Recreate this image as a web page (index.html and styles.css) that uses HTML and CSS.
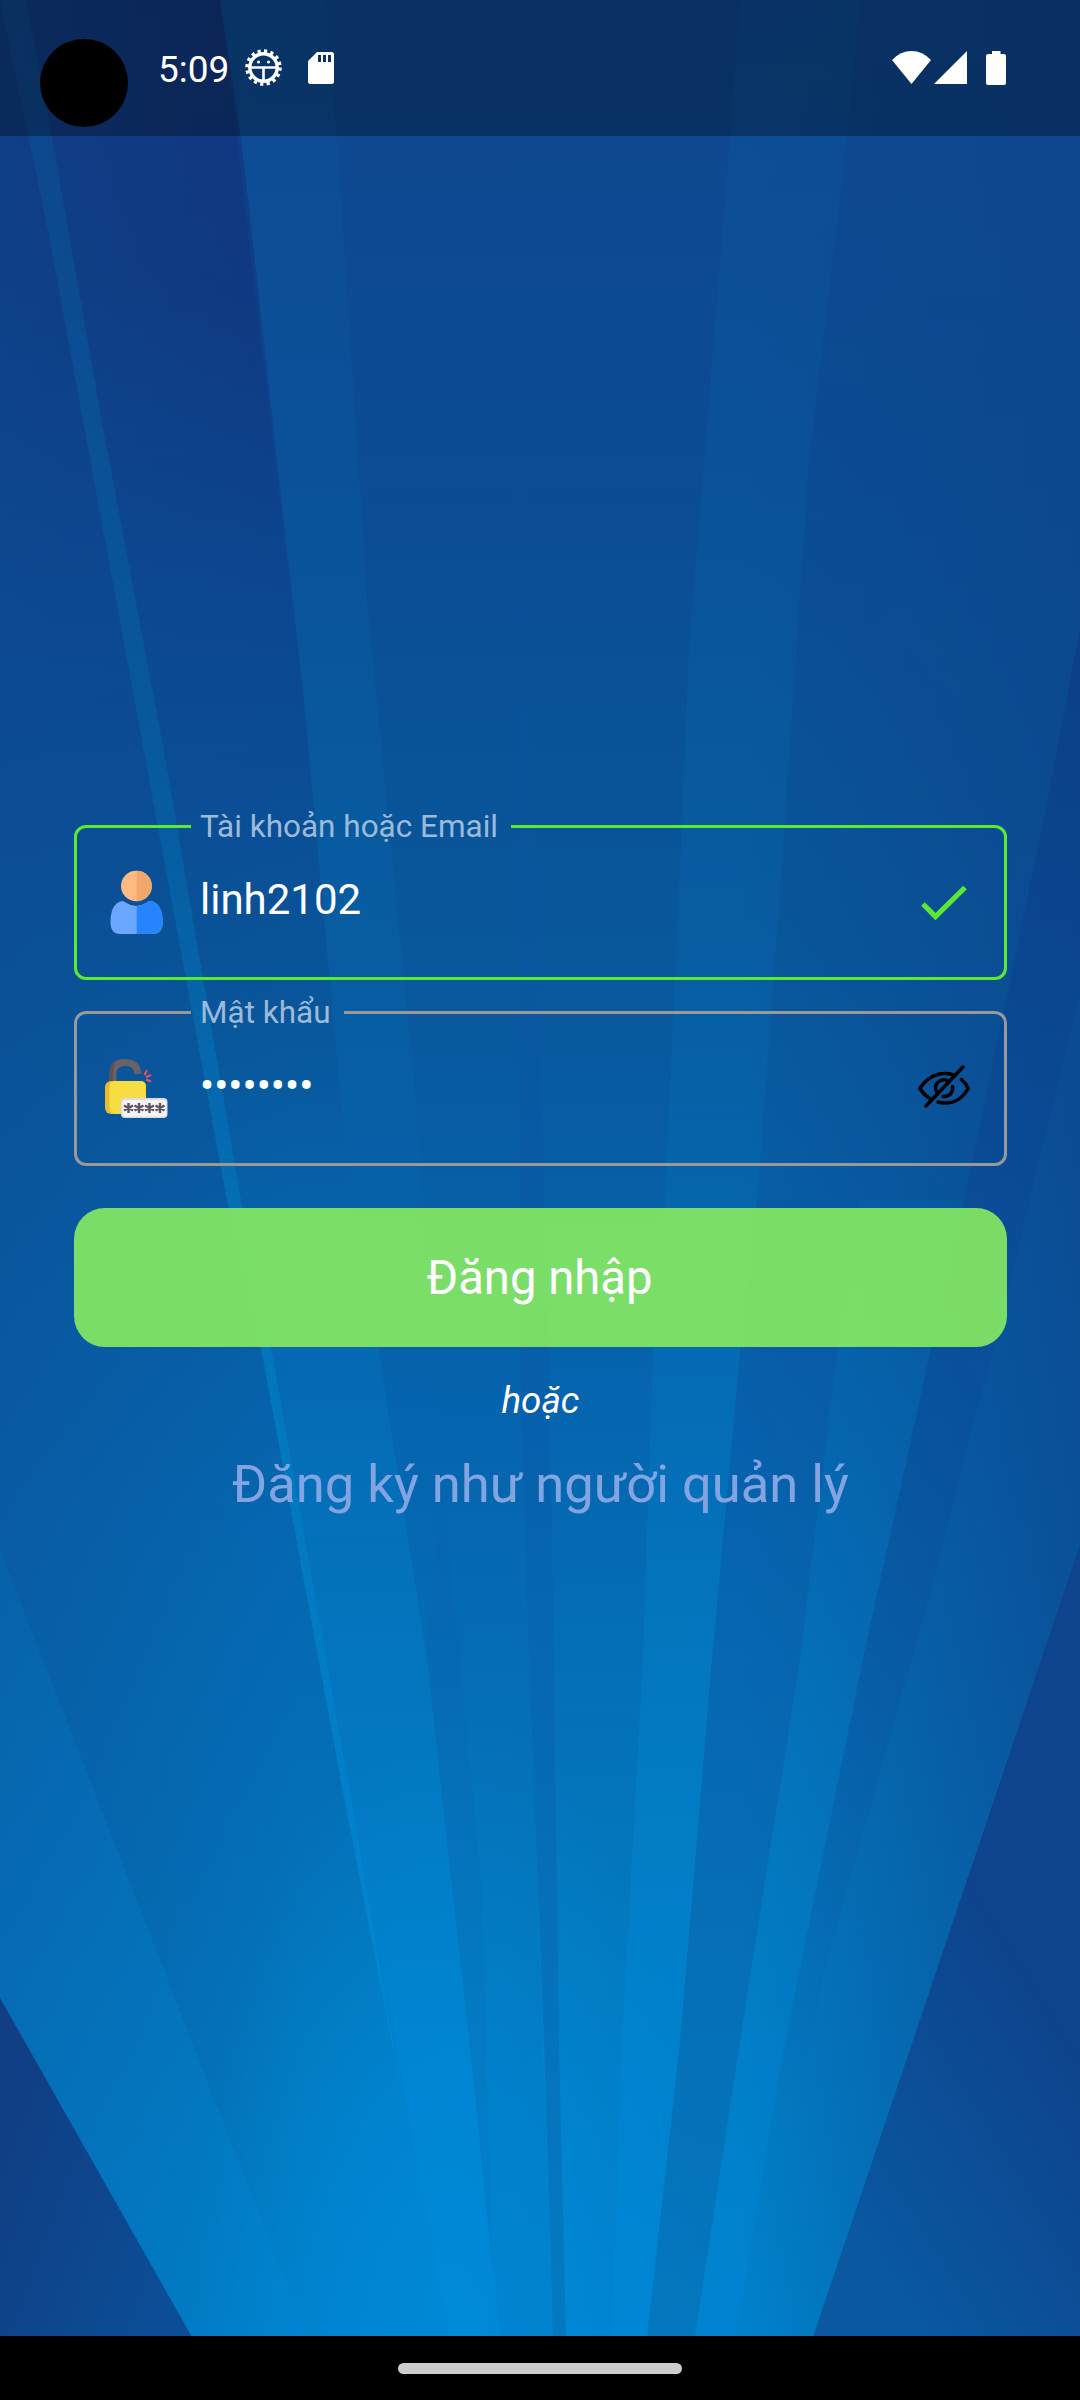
FILE: index.html
```html
<!DOCTYPE html>
<html lang="vi">
<head>
<meta charset="utf-8">
<title>Đăng nhập</title>
<link rel="stylesheet" href="styles.css">
</head>
<body>
<div class="screen">
  <svg class="backdrop" viewBox="0 0 1080 2337" aria-hidden="true">
    <defs>
      <linearGradient id="base" gradientUnits="userSpaceOnUse" x1="0" y1="0" x2="0" y2="2337">
        <stop offset="0" stop-color="#0f4790"/><stop offset=".2" stop-color="#0b4c94"/>
        <stop offset=".4" stop-color="#09579b"/><stop offset=".6" stop-color="#0565ae"/>
        <stop offset=".8" stop-color="#0377bd"/><stop offset="1" stop-color="#0082cc"/>
      </linearGradient>
      <linearGradient id="left" gradientUnits="userSpaceOnUse" x1="0" y1="0" x2="0" y2="2337">
        <stop offset="0" stop-color="#12347d"/><stop offset=".12" stop-color="#10387f"/>
        <stop offset=".25" stop-color="#0c4690"/><stop offset=".42" stop-color="#09559a"/>
        <stop offset=".65" stop-color="#0567b0"/><stop offset=".85" stop-color="#0374ba"/><stop offset="1" stop-color="#007dc4"/>
      </linearGradient>
      <linearGradient id="leftfade" gradientUnits="userSpaceOnUse" x1="0" y1="0" x2="300" y2="0">
        <stop offset="0" stop-color="#0d4b93" stop-opacity=".42"/><stop offset="1" stop-color="#0d4b93" stop-opacity="0"/>
      </linearGradient>
      <linearGradient id="rightfade" gradientUnits="userSpaceOnUse" x1="740" y1="0" x2="1080" y2="0">
        <stop offset="0" stop-color="#0c468e" stop-opacity="0"/><stop offset="1" stop-color="#0c468e" stop-opacity=".72"/>
      </linearGradient>
      <linearGradient id="glow" gradientUnits="userSpaceOnUse" x1="0" y1="0" x2="0" y2="2337">
        <stop offset="0" stop-color="#0678bd" stop-opacity=".14"/><stop offset=".5" stop-color="#0380c8" stop-opacity=".28"/>
        <stop offset=".7" stop-color="#0088d2" stop-opacity=".5"/><stop offset=".9" stop-color="#0088d6" stop-opacity=".9"/>
        <stop offset="1" stop-color="#0088d6"/>
      </linearGradient>
      <linearGradient id="upper" gradientUnits="userSpaceOnUse" x1="0" y1="0" x2="0" y2="1468">
        <stop offset="0" stop-color="#0678bd" stop-opacity=".07"/><stop offset=".6" stop-color="#0380c8" stop-opacity=".14"/>
        <stop offset="1" stop-color="#0380c8" stop-opacity="0"/>
      </linearGradient>
      <linearGradient id="wedge" gradientUnits="userSpaceOnUse" x1="0" y1="1000" x2="0" y2="2337">
        <stop offset="0" stop-color="#0088d2" stop-opacity="0"/><stop offset=".4" stop-color="#0088d2" stop-opacity=".3"/>
        <stop offset="1" stop-color="#0088d6" stop-opacity=".6"/>
      </linearGradient>
      <radialGradient id="core" gradientUnits="userSpaceOnUse" cx="0" cy="0" r="1" gradientTransform="translate(450 2337) scale(260 620)">
        <stop offset="0" stop-color="#008bda" stop-opacity=".85"/><stop offset=".45" stop-color="#008ad8" stop-opacity=".6"/>
        <stop offset="1" stop-color="#0088d4" stop-opacity="0"/>
      </radialGradient>
      <linearGradient id="beam" gradientUnits="userSpaceOnUse" x1="0" y1="0" x2="0" y2="2100">
        <stop offset="0" stop-color="#0a5598" stop-opacity=".35"/><stop offset=".35" stop-color="#075c9f" stop-opacity=".8"/>
        <stop offset=".65" stop-color="#0276bc"/><stop offset="1" stop-color="#0088d4"/>
      </linearGradient>
      <linearGradient id="shade" gradientUnits="userSpaceOnUse" x1="0" y1="400" x2="0" y2="2337">
        <stop offset="0" stop-color="#0a4e9c" stop-opacity="0"/><stop offset=".45" stop-color="#0a57a6" stop-opacity=".5"/>
        <stop offset="1" stop-color="#0670b4" stop-opacity=".6"/>
      </linearGradient>
      <linearGradient id="duskright" gradientUnits="userSpaceOnUse" x1="0" y1="627" x2="0" y2="2100">
        <stop offset="0" stop-color="#0c3b85" stop-opacity=".7"/><stop offset=".5" stop-color="#0a4a98" stop-opacity=".5"/>
        <stop offset="1" stop-color="#0a4e9c" stop-opacity="0"/>
      </linearGradient>
      <linearGradient id="navyleft" gradientUnits="userSpaceOnUse" x1="0" y1="2170" x2="190" y2="2240">
        <stop offset="0" stop-color="#103f85"/><stop offset="1" stop-color="#0b4e97"/>
      </linearGradient>
      <linearGradient id="navyright" gradientUnits="userSpaceOnUse" x1="840" y1="2200" x2="1080" y2="2050">
        <stop offset="0" stop-color="#0958a0"/><stop offset="1" stop-color="#0e438d"/>
      </linearGradient>
    </defs>
    <rect width="1080" height="2337" fill="url(#base)"/>
    <path fill="url(#left)" d="M0 0H220L241 138L303 689L350 1200L379 1353L427 1659L475 2095L500 2337H0Z"/>
    <rect width="300" height="2337" fill="url(#leftfade)"/>
    <rect x="740" width="340" height="2337" fill="url(#rightfade)"/>
    <path fill="url(#glow)" opacity=".3" d="M0 1550L307 2337H192L0 1998Z"/>
    <path fill="url(#upper)" d="M220 0H325L337 138L368 612L413 1071L441 1468H397L379 1353L350 1200L303 689Z"/>
    <path fill="url(#wedge)" d="M200 1000H331L350 1200L379 1353L427 1659L475 2095L500 2337H450L386 1996L348 1781L272 1353L241 1200Z"/>
    <path fill="url(#beam)" d="M0 0H26L52 138L103 428L165 757L241 1200L272 1353L348 1781L405 2110L341 1781L262 1353L227 1200L145 757L48 230Z"/>
    <path fill="url(#core)" d="M180 1700H720V2337H180Z"/>
    <path fill="url(#shade)" opacity=".35" d="M427 1659L441 1468L482 1889L492 2271L475 2095Z"/>
    <path fill="url(#shade)" opacity=".3" d="M475 2095L427 1659L379 1353L350 1200L520 1200L529 1659L553 2337H500Z"/>
    <path fill="url(#shade)" d="M516 138H522L535 900L549 1353L554 1659L559 2042L566 2337H553L544 2042L529 1659L520 1353Z"/>
    <path fill="url(#glow)" opacity=".6" d="M740 0H860L847 138L809 459L778 918L757 1200L740 1353L712 1659L680 2042L647 2337H612L622 2042L643 1659L653 1353L665 1200L678 918L689 650L730 138Z"/>
    <path fill="url(#shade)" d="M757 1200H858L837 1353L800 1659L740 2042L695 2337H647L680 2042L712 1659L740 1353Z"/>
    <path fill="url(#glow)" opacity=".35" d="M858 1200H964L930 1353L863 1659L785 2042L735 2337H695L740 2042L800 1659L837 1353Z"/>
    <path fill="url(#duskright)" d="M1080 627L1047 803L999 1033L964 1200L930 1353L863 1659L785 2042L776 2100H800L826 1965L923 1620L992 1353L1030 1200L1080 995Z"/>
    <path fill="url(#navyleft)" d="M0 1998L192 2337H0Z"/>
    <path fill="url(#navyright)" d="M1080 1544L995 1797L813 2337H1080Z"/>
  </svg>

  <header class="status">
    <span class="camera"></span>
    <span class="clock">5:09</span>
    <svg class="ic-debug" viewBox="0 0 37 37"><g fill="none" stroke="#fff"><circle cx="18.500" cy="18.500" r="13.700" stroke-width="3.400"/><circle cx="18.500" cy="18.500" r="16" stroke-width="4.500" stroke-dasharray="3.100 3.183"/><path d="M5 18.500H32M18.500 18.500V32" stroke-width="2.600"/></g><circle cx="13.500" cy="13" r="1.500" fill="#fff"/><circle cx="23.500" cy="13" r="1.500" fill="#fff"/></svg>
    <svg class="ic-sd" viewBox="0 0 26 32"><path fill="#fff" fill-rule="evenodd" d="M9 0H23.500Q26 0 26 2.500V29.500Q26 32 23.500 32H2.500Q0 32 0 29.500V9ZM10 3V10H13V3ZM15 3V10H18V3ZM20 3V10H23V3Z"/></svg>
    <span class="spacer"></span>
    <svg class="ic-wifi" viewBox="0 0 39 33"><path fill="#fff" d="M0 9Q8.500 0 19.500 0T39 9L19.500 33Z"/></svg>
    <svg class="ic-cell" viewBox="0 0 33 33"><path fill="#fff" d="M33 0V33H0Z"/></svg>
    <svg class="ic-batt" viewBox="0 0 20 34"><path fill="#fff" d="M6 0H14.500V3H18Q20 3 20 5V32Q20 34 18 34H2Q0 34 0 32V5Q0 3 2 3H6Z"/></svg>
  </header>

  <main class="login">
    <fieldset class="field valid">
      <legend class="l-user">Tài khoản hoặc Email</legend>
      <div class="row">
        <svg class="ic-lead" viewBox="0 0 64 64"><circle cx="32.300" cy="16" r="15.300" fill="#ffb983"/><path fill="#f3a76a" d="M32.700.7A15.300 15.300 0 0 1 32.700 31.300Z"/><path fill="#6ba7ff" d="M6.500 52C6.500 42 9 33 18 31Q20 31 22.500 33Q32 39 42 33Q44 31 47 31C56 33 58.700 42 58.700 52Q58.700 64 49 64H16Q6.500 64 6.500 52Z"/><path fill="#2684ff" d="M32.700 36Q38 36 42 33Q44 31 47 31C56 33 58.700 42 58.700 52Q58.700 64 49 64H32.700Z"/></svg>
        <span class="value">linh2102</span>
        <svg class="ic-check" viewBox="0 0 46 36"><path fill="none" stroke="#5bea33" stroke-width="5.200" d="M2 19L14.500 31.500L44 2.500"/></svg>
      </div>
    </fieldset>
    <fieldset class="field">
      <legend class="l-pass">Mật khẩu</legend>
      <div class="row">
        <svg class="ic-lead" viewBox="0 -2 64 64"><path fill="none" stroke="#6a6167" stroke-width="7" d="M9 26V16Q9 4.500 21 4.500Q33 4.500 34 16"/><path fill="#5b5259" d="M5.500 26V14Q6 6 12 2Q9 8 9 14V26Z"/><rect x="1" y="23" width="41" height="33" rx="6" fill="#e9ba2e"/><rect x="5.500" y="23" width="36.500" height="33" rx="5" fill="#f5dd43"/><path fill="none" stroke="#e9545d" stroke-width="2" d="M40.500 17L43 12M42 19L47 17M42 21.500L47 23.500"/><rect x="17" y="40" width="46.500" height="20" rx="4" fill="#ded9e2"/><rect x="18.500" y="42" width="44" height="16.500" rx="3" fill="#f7f5fa"/><path stroke="#5f565d" stroke-width="2.400" d="M24.500 45V55M20 47.500L29 52.500M29 47.500L20 52.500M35 45V55M30.500 47.500L39.500 52.500M39.500 47.500L30.500 52.500M45.500 45V55M41 47.500L50 52.500M50 47.500L41 52.500M56 45V55M51.500 47.500L60.500 52.500M60.500 47.500L51.500 52.500"/></svg>
        <span class="value">••••••••</span>
        <svg class="ic-eye" viewBox="0 0 52 43"><g fill="none" stroke="#000" stroke-width="3.500" stroke-linecap="round"><path d="M12.500 34Q6 30 1.800 23.500Q12 8.500 27 8.500Q33 8.500 37 10.500"/><path d="M43.500 14.500Q48 18.500 50.200 23.500Q42 38 27 38Q23 38 20 37"/><path d="M19.500 28.500Q15.500 22 19.500 17.500Q25 12.500 31.500 16.500"/><path d="M34.500 21.500Q35.500 27 31 30Q28 32 25 31.500"/><path d="M8 41L45 2"/></g></svg>
      </div>
    </fieldset>
    <button class="submit">Đăng nhập</button>
    <p class="or">hoặc</p>
    <a class="register">Đăng ký như người quản lý</a>
  </main>

  <footer class="navbar"><span class="handle"></span></footer>
</div>
</body>
</html>
```

FILE: styles.css
```css
* { box-sizing: border-box; }
body { margin: 0; font-family: Roboto, "Noto Sans", sans-serif; color: #fff; }
svg { display: block; flex: none; }
.screen { position: relative; width: 1080px; height: 2400px; display: flex; flex-direction: column; overflow: hidden; }
.backdrop { position: absolute; left: 0; top: 0; width: 1080px; height: 2337px; z-index: -1; }

.status { height: 136px; display: flex; align-items: flex-start; padding: 0 74px 0 40px; background: rgba(0, 0, 0, .31); }
.camera { width: 88px; height: 88px; margin-top: 39px; border-radius: 50%; background: #000; }
.clock { margin: 48px 0 0 30px; width: 71px; font-size: 37px; line-height: 44px; white-space: nowrap; }
.ic-debug { width: 37px; height: 37px; margin: 49px 0 0 16px; }
.ic-sd { width: 26px; height: 32px; margin: 52px 0 0 26px; }
.spacer { flex: 1; }
.ic-wifi { width: 39px; height: 33px; margin-top: 51px; }
.ic-cell { width: 33px; height: 33px; margin: 51px 0 0 3px; }
.ic-batt { width: 20px; height: 34px; margin: 51px 0 0 19px; }

.login { flex: 1; display: flex; flex-direction: column; padding: 672px 73px 0 74px; }
.field { min-width: 0; height: 172px; margin: 0 0 14px; padding: 0; border: 3px solid #999; border-radius: 12px; }
.valid { border-color: #5bea33; }
.field legend { height: 37px; margin-left: 114px; padding: 0 0 0 9px; font-size: 31.5px; line-height: 37px; color: #9dbbd9; white-space: nowrap; }
.l-user { width: 320px; }
.l-pass { width: 153px; }
.row { display: flex; align-items: flex-start; height: 132px; padding: 25px 34px 0 27px; }
.ic-lead { width: 64px; height: 64px; }
.value { flex: 1; margin-left: 32px; padding-top: 5px; font-size: 42px; line-height: 50px; }
.ic-check { width: 46px; height: 36px; margin: 15px 3px 0 0; }
.ic-eye { width: 52px; height: 43px; margin: 9px 0 0; }
.submit { height: 139px; margin: 28px 0 0; padding: 2px 2px 0 0; border: 0; border-radius: 31px; background: rgba(130, 229, 100, .94); color: #fff; font: 47.25px/137px Roboto, "Noto Sans", sans-serif; }
.or { margin: 32px 0 0; font-size: 36.75px; line-height: 44px; font-style: italic; text-align: center; }
.register { margin-top: 30px; font-size: 52.5px; line-height: 62px; text-align: center; color: #82a4e1; }

.navbar { height: 64px; display: flex; justify-content: center; padding-top: 27px; background: #000; }
.handle { width: 284px; height: 11px; border-radius: 6px; background: #ccc; }
```
